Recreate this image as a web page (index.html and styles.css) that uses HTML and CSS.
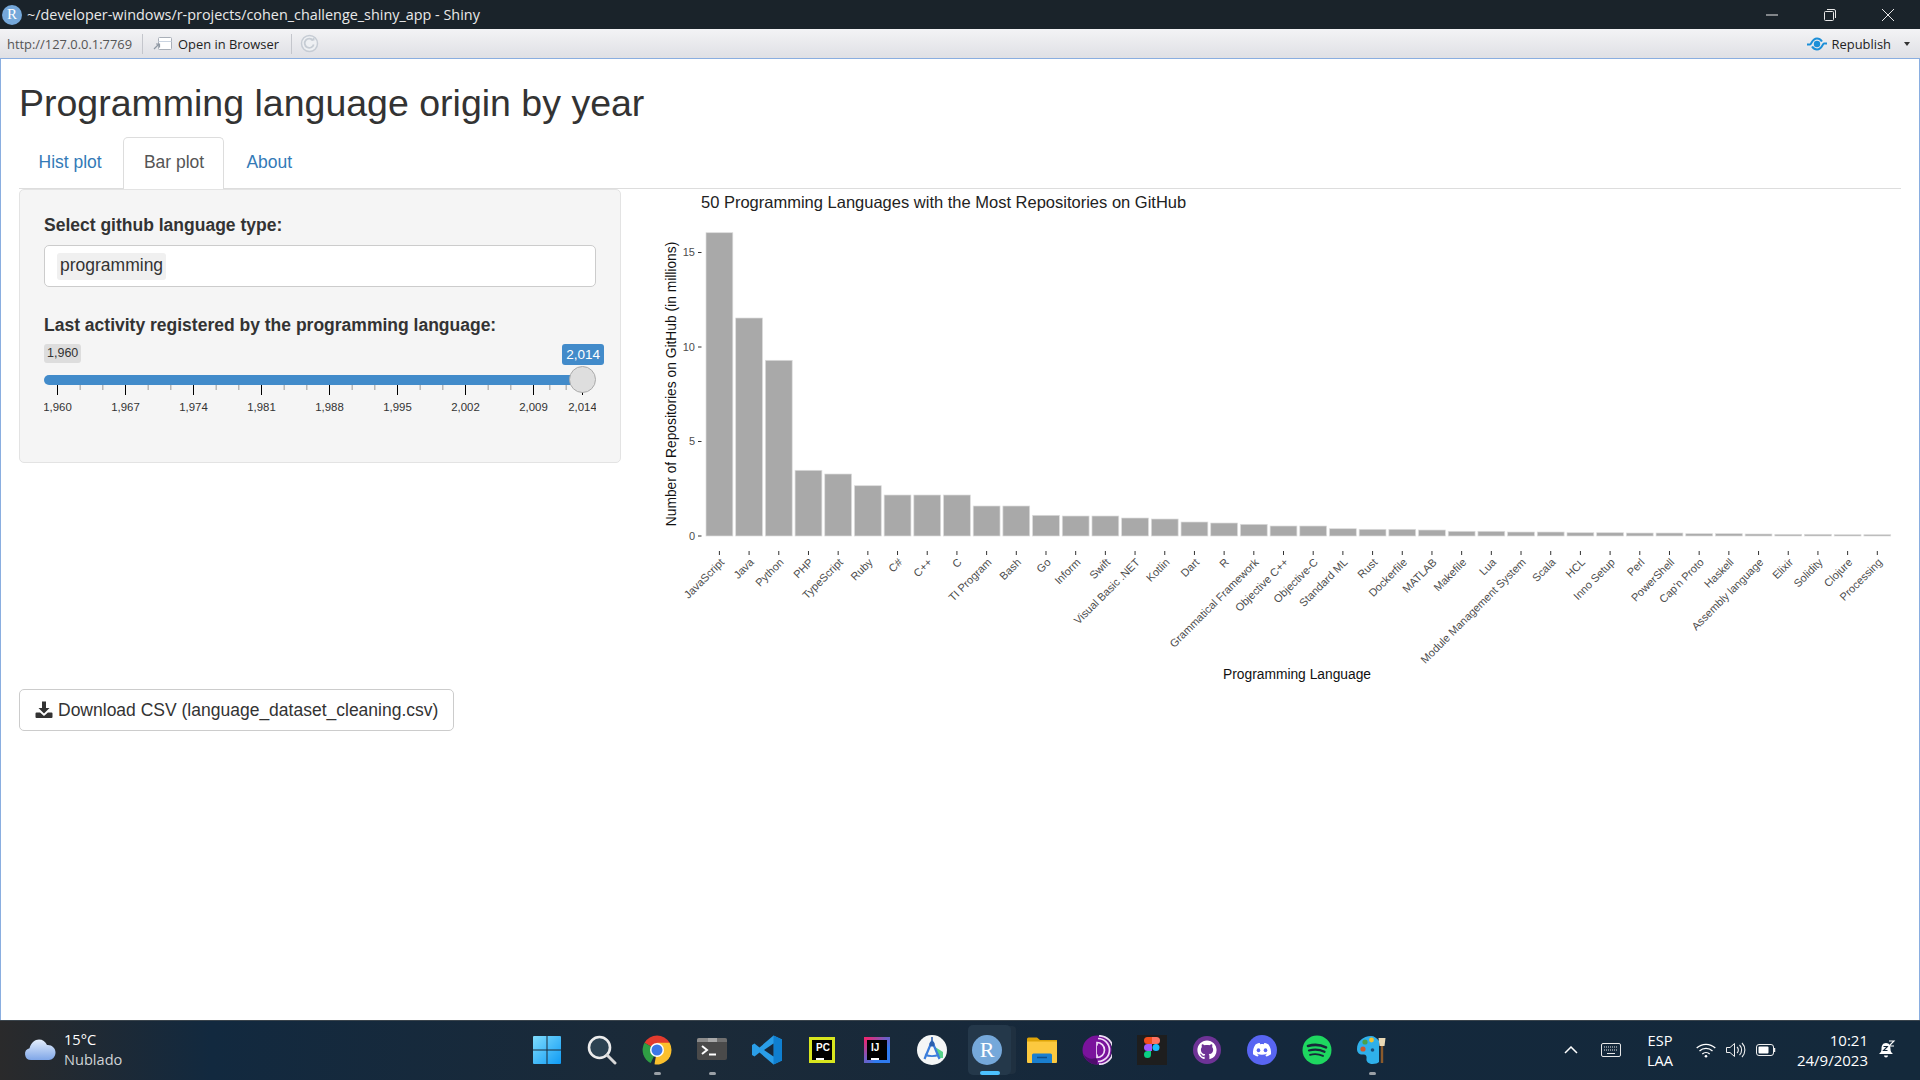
FILE: index.html
```html
<!DOCTYPE html>
<html lang="en">
<head>
    <meta charset="UTF-8">
    <title>Programming language origin by year</title>
    <link rel="stylesheet" href="styles.css">
</head>
<body>
    <div class="titlebar">
        <span class="r-badge">R</span>
        <span class="titlebar-text">~/developer-windows/r-projects/cohen_challenge_shiny_app - Shiny</span>
        <div class="window-buttons">
            <svg width="12" height="12" viewBox="0 0 12 12"><path d="M0 6h12" stroke="#e8e8e8" fill="none"/></svg>
            <svg width="12" height="12" viewBox="0 0 12 12"><path d="M.5 3.5a1 1 0 0 1 1-1h7a1 1 0 0 1 1 1v7a1 1 0 0 1-1 1h-7a1 1 0 0 1-1-1zM3 .5h7a1.5 1.5 0 0 1 1.5 1.5v7" stroke="#e8e8e8" fill="none"/></svg>
            <svg width="12" height="12" viewBox="0 0 12 12"><path d="M0 0l12 12M12 0L0 12" stroke="#e8e8e8" fill="none"/></svg>
        </div>
    </div>

    <div class="toolbar">
        <span class="url">http://127.0.0.1:7769</span>
        <span class="tool-sep"></span>
        <svg class="open-icon" width="20" height="16" viewBox="0 0 20 16">
            <rect x="5.5" y="1.5" width="13" height="12" rx="1" fill="#fff" stroke="#a9afb8"/>
            <path d="M5.5 5.500h13" stroke="#c9d3e0"/>
            <path d="M1 13l5-5M3 8h3.500v3.500" stroke="#8f98a3" fill="none" stroke-width="1.200"/>
        </svg>
        <span class="open-text">Open in Browser</span>
        <span class="tool-sep second"></span>
        <svg width="19" height="19" viewBox="0 0 19 19">
            <circle cx="9.500" cy="9.500" r="8" fill="#eef0f3" stroke="#c6ccd4" stroke-width="1.500"/>
            <path d="M13 6.500a4.600 4.600 0 1 0 .7 4" stroke="#c6ccd4" stroke-width="1.800" fill="none"/>
            <path d="M10.500 6.500h4v-3.500z" fill="#c6ccd4"/>
        </svg>
        <div class="republish">
            <svg width="22" height="16" viewBox="0 0 22 16">
                <circle cx="11" cy="8" r="3.200" fill="#1c8fd8"/>
                <path d="M1 8.500h3c1.500 0 2-6 7-6 3 0 4 1.600 5 3M21 7.500h-3c-1.500 0-2 6-7 6-3 0-4-1.600-5-3" stroke="#1c8fd8" stroke-width="2" fill="none"/>
            </svg>
            <span>Republish</span>
            <span class="caret"></span>
        </div>
    </div>

    <div class="app">
        <h1>Programming language origin by year</h1>
        <ul class="tabs">
            <li><a>Hist plot</a></li>
            <li class="active"><a>Bar plot</a></li>
            <li><a>About</a></li>
        </ul>
        <div class="row">
            <div class="sidebar">
                <label>Select github language type:</label>
                <div class="select-box"><span class="chip">programming</span></div>
                <label class="second-label">Last activity registered by the programming language:</label>
                <div class="slider">
                    <div class="slider-values">
                        <span class="value-min">1,960</span>
                        <span class="value-max">2,014</span>
                    </div>
                    <div class="slider-track"><span class="slider-handle"></span></div>
                    <svg id="sliderGrid" class="slider-grid" width="552" height="30"></svg>
                </div>
            </div>
            <svg id="barChart" class="chart" width="1280" height="500" viewBox="620 189 1280 500"></svg>
        </div>
        <button class="download">
            <svg width="18" height="18" viewBox="0 0 18 18">
                <path d="M7 .5h4v6.500h3.500L9 12.500 3.500 7H7z" fill="#333"/>
                <path d="M1.500 11.500h3.600L9 15l3.900-3.500h3.600a1 1 0 0 1 1 1v3.500a1 1 0 0 1-1 1h-15a1 1 0 0 1-1-1v-3.500a1 1 0 0 1 1-1z" fill="#333"/>
            </svg>
            Download CSV (language_dataset_cleaning.csv)
        </button>
    </div>

    <div class="taskbar">
        <div class="weather">
            <svg width="32" height="22" viewBox="0 0 32 22">
                <defs>
                    <linearGradient id="cloudFill" x1="0" y1="0" x2="0" y2="1">
                        <stop offset="0" stop-color="#e4eefc"/>
                        <stop offset="1" stop-color="#7fa6e8"/>
                    </linearGradient>
                </defs>
                <path d="M7 21a6 6 0 0 1-1.500-11.800C7 3.500 11 .5 15 .5c3.500 0 6.500 2 8 5.500 4.500-.5 8.500 3 8.500 7.500S28 21 25 21z" fill="url(#cloudFill)"/>
            </svg>
            <div class="weather-text">
                <span>15°C</span>
                <span class="weather-sub">Nublado</span>
            </div>
        </div>

        <div class="task-icons">
            <div class="task-item">
                <svg width="30" height="30" viewBox="0 0 30 30">
                    <defs>
                        <linearGradient id="winFill" x1="0" y1="0" x2="1" y2="1">
                            <stop offset="0" stop-color="#7fdcfc"/>
                            <stop offset="1" stop-color="#0f9bf5"/>
                        </linearGradient>
                    </defs>
                    <path d="M1 2a1 1 0 0 1 1-1h12.500v13.500H1zM15.500 1H28a1 1 0 0 1 1 1v12.500H15.500zM1 15.500h13.500V29H2a1 1 0 0 1-1-1zM15.500 15.500H29V28a1 1 0 0 1-1 1H15.500z" fill="url(#winFill)"/>
                </svg>
            </div>
            <div class="task-item">
                <svg width="30" height="30" viewBox="0 0 30 30">
                    <circle cx="12.500" cy="12.500" r="10.500" fill="#2c4252" stroke="#ececec" stroke-width="2.600"/>
                    <path d="M20 20l8 8" stroke="#d8d8d8" stroke-width="3" stroke-linecap="round"/>
                </svg>
            </div>
            <div class="task-item running">
                <svg width="30" height="30" viewBox="0 0 30 30">
                    <path d="M15 15L2.500 7.800A14.500 14.500 0 0 1 27.600 7.800z" fill="#e33b2e"/>
                    <path d="M15 15l-6.300 13A14.500 14.500 0 0 1 2.500 7.800L15 15z" fill="#2f9e44" />
                    <path d="M15 15h14.500A14.500 14.500 0 0 1 12.500 29.300L15 15z" fill="#fbc02d"/>
                    <path d="M15 7.800h12.600A14.500 14.500 0 0 1 29.500 15H22z" fill="#fbc02d"/>
                    <circle cx="15" cy="15" r="7" fill="#fff"/>
                    <circle cx="15" cy="15" r="5.500" fill="#3b78e7"/>
                </svg>
            </div>
            <div class="task-item running">
                <svg width="30" height="30" viewBox="0 0 30 30">
                    <rect y="3" width="30" height="22" rx="2" fill="#4a4a4a"/>
                    <path d="M0 7V5a2 2 0 0 1 2-2h9v4z" fill="#8c8c8c"/>
                    <path d="M11 3h9v4h-9z" fill="#a8a8a8"/>
                    <path d="M20 3h8a2 2 0 0 1 2 2v2H20z" fill="#6f6f6f"/>
                    <path d="M5 11l5 4-5 4" stroke="#fff" stroke-width="2" fill="none"/>
                    <path d="M12 19.500h7" stroke="#fff" stroke-width="2"/>
                </svg>
            </div>
            <div class="task-item">
                <svg width="30" height="30" viewBox="0 0 30 30">
                    <path d="M21.500 .5L30 4.500v21L21.500 29.500 7.500 17.500 2.500 21.500 0 20V10l2.500-1.500 5 4z" fill="#2a9ee8"/>
                    <path d="M21.500 .5L30 4.500v21l-8.500 4z" fill="#0f7fd0"/>
                    <path d="M21.500 8.500L12 15l9.500 6.500z" fill="#17283a"/>
                </svg>
            </div>
            <div class="task-item">
                <span class="jb-icon pc">PC</span>
            </div>
            <div class="task-item">
                <span class="jb-icon ij">IJ</span>
            </div>
            <div class="task-item">
                <svg width="30" height="30" viewBox="0 0 30 30">
                    <circle cx="15" cy="15" r="15" fill="#f4f6f6"/>
                    <path d="M18 12l8 5v6h-5z" fill="#57d28a"/>
                    <path d="M15 6L7.500 24M15 6l7.500 18M8 19.500c4 2 10 2 14 0" stroke="#3a7ddb" stroke-width="2.200" fill="none"/>
                    <circle cx="15" cy="9" r="2.600" fill="#2b5fae"/>
                    <path d="M15 2v5" stroke="#2b5fae" stroke-width="1.600"/>
                </svg>
            </div>
            <div class="task-item selected">
                <span class="r-big">R</span>
            </div>
            <div class="task-item">
                <svg width="30" height="30" viewBox="0 0 30 30">
                    <path d="M0 4a1.500 1.500 0 0 1 1.500-1.500h8.500l3 2.500h17v4H0z" fill="#dea408"/>
                    <path d="M0 6.500h30V27a1 1 0 0 1-1 1H1a1 1 0 0 1-1-1z" fill="#fcc93f"/>
                    <path d="M5 20a1.500 1.500 0 0 1 1.500-1.500h17A1.500 1.500 0 0 1 25 20v8H5z" fill="#1a7fcf"/>
                    <path d="M10 22.500h10" stroke="#0e4f8a" stroke-width="1.500"/>
                </svg>
            </div>
            <div class="task-item">
                <svg width="30" height="30" viewBox="0 0 30 30">
                    <circle cx="15" cy="15" r="14.500" fill="#7a139c"/>
                    <path d="M15 29.500a14.500 14.500 0 0 1-14-11c4 6 10 6 14 4z" fill="#4f0d6e"/>
                    <path d="M15 7.500a7.500 7.500 0 0 1 0 15zM16 3.500a11.500 11.500 0 0 1 0 23M17 .8a14.200 14.200 0 0 1 0 28.400" stroke="#f0ddf7" stroke-width="1.700" fill="none"/>
                    <path d="M15 10.500a4.500 4.500 0 0 1 0 9z" fill="#7a139c"/>
                </svg>
            </div>
            <div class="task-item">
                <svg width="30" height="30" viewBox="0 0 30 30">
                    <rect width="30" height="30" fill="#1e1e1e"/>
                    <path d="M15 2h-4.500a3.500 3.500 0 0 0 0 7H15z" fill="#f24e1e"/>
                    <path d="M15 2h4.500a3.500 3.500 0 0 1 0 7H15z" fill="#ff7262"/>
                    <path d="M15 9h-4.500a3.500 3.500 0 0 0 0 7H15z" fill="#a259ff"/>
                    <circle cx="19" cy="12.500" r="3.500" fill="#1abcfe"/>
                    <path d="M10.500 16H14v3.500a3.500 3.500 0 1 1-3.500-3.500z" fill="#0acf83"/>
                </svg>
            </div>
            <div class="task-item">
                <svg width="30" height="30" viewBox="0 0 30 30">
                    <circle cx="15" cy="15" r="14" fill="#6e3396"/>
                    <g transform="translate(5.400 5.400) scale(1.200)">
                        <path d="M8 0C3.580 0 0 3.580 0 8c0 3.540 2.290 6.530 5.470 7.590.4.070.55-.17.55-.38 0-.19-.01-.82-.01-1.490-2.010.37-2.530-.49-2.690-.94-.09-.23-.48-.94-.82-1.130-.28-.15-.68-.52-.01-.53.63-.01 1.080.58 1.230.82.72 1.210 1.870.87 2.330.66.07-.52.28-.87.51-1.070-1.780-.2-3.640-.89-3.640-3.950 0-.87.31-1.590.82-2.150-.08-.2-.36-1.020.08-2.120 0 0 .67-.21 2.200.82.64-.18 1.320-.27 2-.27.68 0 1.360.09 2 .27 1.530-1.040 2.200-.82 2.200-.82.44 1.100.16 1.920.08 2.120.51.56.82 1.270.82 2.150 0 3.070-1.870 3.750-3.650 3.950.29.25.54.73.54 1.480 0 1.070-.01 1.930-.01 2.200 0 .21.15.46.55.38A8.013 8.013 0 0016 8c0-4.420-3.580-8-8-8z" fill="#fff"/>
                    </g>
                </svg>
            </div>
            <div class="task-item">
                <svg width="30" height="30" viewBox="0 0 30 30">
                    <circle cx="15" cy="15" r="15" fill="#5865f2"/>
                    <path d="M8.500 9.500c2-1 3.500-1.300 4.200-1.400l.5 1.100c1.200-.2 2.400-.2 3.600 0l.5-1.100c.7.100 2.200.4 4.200 1.400 2 3 2.800 6 2.500 9.800-1.800 1.300-3.400 2-4.700 2.300l-1-1.600 1.700-.9-.4-.3c-3.100 1.400-6.100 1.400-9.200 0l-.4.3 1.700.9-1 1.600c-1.300-.3-2.900-1-4.700-2.300-.3-3.800.5-6.800 2.500-9.800z" fill="#fff"/>
                    <ellipse cx="11.500" cy="15.200" rx="1.800" ry="2" fill="#5865f2"/>
                    <ellipse cx="18.500" cy="15.200" rx="1.800" ry="2" fill="#5865f2"/>
                </svg>
            </div>
            <div class="task-item">
                <svg width="30" height="30" viewBox="0 0 30 30">
                    <circle cx="15" cy="15" r="14.500" fill="#1ed760"/>
                    <path d="M6 11c6-1.800 12.500-1.400 18 1.400" stroke="#17283a" stroke-width="2.600" fill="none" stroke-linecap="round"/>
                    <path d="M7 15.500c5.500-1.500 11-1 15.500 1.300" stroke="#17283a" stroke-width="2.200" fill="none" stroke-linecap="round"/>
                    <path d="M8 19.800c4.500-1.200 9-.8 13 1.100" stroke="#17283a" stroke-width="1.900" fill="none" stroke-linecap="round"/>
                </svg>
            </div>
            <div class="task-item running">
                <svg width="30" height="30" viewBox="0 0 30 30">
                    <path d="M14 1C6 1 0 6.500 0 14c0 4 3 6 6 5.500 3-.3 4 1.500 3.500 4-.5 3 2 5.500 6 5.500 3 0 5.500-1 6.500-2V6C20 3 17 1 14 1z" fill="#2fb0ea"/>
                    <circle cx="6" cy="14" r="2.600" fill="#d0552c"/>
                    <circle cx="8" cy="7" r="2.600" fill="#4aa14a"/>
                    <circle cx="14.500" cy="5" r="2.400" fill="#f2c230"/>
                    <circle cx="15.500" cy="15" r="1.800" fill="#1d4f7a"/>
                    <path d="M25 11v17" stroke="#8a5a2b" stroke-width="2.400"/>
                    <path d="M21.500 3h7l-1 8h-5z" fill="#e9d9b5"/>
                </svg>
            </div>
        </div>

        <div class="tray">
            <svg class="tray-caret" width="14" height="8" viewBox="0 0 14 8"><path d="M1 7l6-6 6 6" stroke="#fff" stroke-width="1.500" fill="none"/></svg>
            <svg class="tray-keyboard" width="20" height="14" viewBox="0 0 20 14">
                <rect x=".5" y=".5" width="19" height="13" rx="1.500" fill="none" stroke="#e8e8e8"/>
                <path d="M3 4h14M3 7h14" stroke="#e8e8e8" stroke-dasharray="1 1"/>
                <path d="M6 10.500h8" stroke="#e8e8e8"/>
            </svg>
            <div class="tray-lang"><span>ESP</span><span>LAA</span></div>
            <svg class="tray-wifi" width="20" height="15" viewBox="0 0 20 15">
                <path d="M.7 5a13.500 13.500 0 0 1 18.600 0M3.500 8a9.500 9.500 0 0 1 13 0M6.300 11a5.500 5.500 0 0 1 7.400 0" stroke="#fff" stroke-width="1.300" fill="none"/>
                <circle cx="10" cy="13.300" r="1.300" fill="#fff"/>
            </svg>
            <svg class="tray-sound" width="20" height="16" viewBox="0 0 20 16">
                <path d="M.5 5.500h3.500L8.500 1.500v13L4 10.500H.5z" fill="none" stroke="#eee"/>
                <path d="M11 5a4 4 0 0 1 0 6M13.500 3a7 7 0 0 1 0 10M16 1a10 10 0 0 1 0 14" fill="none" stroke="#eee" stroke-width="1.100"/>
            </svg>
            <svg class="tray-battery" width="20" height="12" viewBox="0 0 20 12">
                <rect x=".5" y=".5" width="17" height="11" rx="2.500" fill="none" stroke="#eee"/>
                <rect x="2.500" y="2.500" width="10" height="7" rx="1" fill="#fff"/>
                <path d="M18.500 4v4" stroke="#eee" stroke-width="1.500"/>
            </svg>
            <div class="tray-clock"><span>10:21</span><span>24/9/2023</span></div>
            <svg class="tray-bell" width="18" height="20" viewBox="0 0 18 20">
                <path d="M8 3c-3.500 0-4.500 3-4.500 6 0 2.500-1 3.500-2.500 5h14c-1.500-1.500-2.500-2.500-2.500-5 0-3-1-6-4.500-6z" fill="#fff"/>
                <path d="M6 15.500a2 2 0 0 0 4 0z" fill="#fff"/>
                <path d="M5.500 6.500h4l-4 4h4" stroke="#14293b" stroke-width="1.100" fill="none"/>
                <path d="M11 1h5l-5 5h5" stroke="#fff" stroke-width="1.100" fill="none"/>
            </svg>
        </div>
    </div>

    <script src="chart.js"></script>
</body>
</html>
```

FILE: styles.css
```css
html, body {
    margin: 0;
    padding: 0;
    height: 100%;
}
body {
    display: flex;
    flex-direction: column;
    width: 1920px;
    height: 1080px;
    overflow: hidden;
    font-family: "Liberation Sans", Arial, sans-serif;
    color: #333;
    background-color: #fff;
}

/* window chrome */
.titlebar {
    display: flex;
    align-items: center;
    height: 29px;
    flex-shrink: 0;
    background-color: #1a232a;
    color: #e9e9e9;
}
.r-badge {
    display: flex;
    align-items: center;
    justify-content: center;
    width: 20px;
    height: 20px;
    margin-left: 2px;
    border-radius: 50%;
    background-color: #75a8da;
    color: #fff;
    font-family: "Liberation Serif", serif;
    font-size: 15px;
}
.titlebar-text {
    margin-left: 5px;
    font-family: "Open Sans", sans-serif;
    font-size: 14.4px;
}
.window-buttons {
    display: flex;
    gap: 46px;
    margin-left: auto;
    margin-right: 26px;
}
.toolbar {
    display: flex;
    align-items: center;
    height: 29px;
    flex-shrink: 0;
    background: linear-gradient(#f3f3f5, #dfe0e5);
    font-family: "Open Sans", sans-serif;
    font-size: 12.9px;
    color: #222;
}
.url {
    margin-left: 7px;
    width: 135px;
    color: #555;
}
.tool-sep {
    width: 1px;
    height: 20px;
    background-color: #c4c6cc;
}
.open-icon {
    margin-left: 10px;
    margin-right: 5px;
}
.open-text {
    width: 113px;
}
.tool-sep.second {
    margin-right: 8px;
}
.republish {
    display: flex;
    align-items: center;
    gap: 4px;
    margin-left: auto;
    margin-right: 10px;
}
.caret {
    width: 0;
    height: 0;
    margin-left: 9px;
    border-left: 3.5px solid transparent;
    border-right: 3.5px solid transparent;
    border-top: 4px solid #333;
}

/* shiny page */
.app {
    flex: 1;
    padding: 24px 18px 0;
    border: 1px solid #8aaee0;
    border-bottom: 0;
    min-height: 0;
}
h1 {
    margin: 0 0 13px;
    font-size: 37.5px;
    font-weight: 400;
    line-height: 41px;
    color: #333;
}
.tabs {
    display: flex;
    gap: 2.7px;
    margin: 0;
    padding: 0;
    list-style: none;
    border-bottom: 1px solid #ddd;
    height: 51px;
    font-size: 17.5px;
}
.tabs a {
    display: block;
    padding: 12px 19px 14px 19.5px;
    line-height: 25px;
    color: #337ab7;
    border: 1px solid transparent;
    border-bottom: 0;
    margin-left: -1px;
}
.tabs .active a {
    height: 25px;
    color: #555;
    background-color: #fff;
    border-color: #ddd;
    border-radius: 5px 5px 0 0;
}
.row {
    display: flex;
    height: 500px;
}
.sidebar {
    box-sizing: border-box;
    width: 602px;
    height: 274px;
    padding: 23px 24px;
    flex-shrink: 0;
    background-color: #f5f5f5;
    border: 1px solid #e3e3e3;
    border-radius: 5px;
    font-size: 17.5px;
}
label {
    display: block;
    font-weight: 700;
    line-height: 25px;
}
.second-label {
    margin-top: 26px;
}
.select-box {
    display: flex;
    align-items: center;
    box-sizing: border-box;
    height: 42px;
    margin-top: 7px;
    padding: 0 12px;
    background-color: #fff;
    border: 1px solid #ccc;
    border-radius: 5px;
}
.chip {
    padding: 1px 3px 3px;
    line-height: 23px;
    background-color: #f0f0f0;
    border-radius: 3px;
}
.slider {
    margin-top: 6px;
}
.slider-values {
    display: flex;
    justify-content: space-between;
    align-items: flex-start;
    height: 21px;
    margin-right: -8px;
    font-size: 12.5px;
}
.value-min {
    padding: 0 3px;
    line-height: 19px;
    background-color: #ddd;
    border-radius: 3px;
}
.value-max {
    padding: 0 4px;
    line-height: 21px;
    font-size: 13.5px;
    color: #fff;
    background-color: #428bca;
    border-radius: 3px;
}
.slider-track {
    position: relative;
    width: 538px;
    height: 10px;
    margin-top: 10px;
    background-color: #428bca;
    border-radius: 5px 0 0 5px;
}
.slider-handle {
    position: absolute;
    top: -9.5px;
    left: 525px;
    box-sizing: border-box;
    width: 27px;
    height: 27px;
    background-color: #dedede;
    border: 1px solid #aaa;
    border-radius: 50%;
}
.slider-grid {
    display: block;
}
.slider-grid text {
    font-size: 11.4px;
    fill: #333;
    text-anchor: middle;
}
.chart {
    display: block;
    flex-shrink: 0;
}
.chart text {
    font-family: "Liberation Sans", Arial, sans-serif;
}
.chart-title {
    font-size: 16.5px;
    fill: #222;
}
.axis-title {
    font-size: 13.8px;
    fill: #111;
    text-anchor: middle;
}
.axis-label {
    font-size: 11px;
    fill: #4d4d4d;
}
.download {
    display: flex;
    align-items: center;
    gap: 5px;
    box-sizing: border-box;
    width: 435px;
    height: 42px;
    padding: 0 0 0 15px;
    background-color: #fff;
    border: 1px solid #ccc;
    border-radius: 5px;
    font-family: "Liberation Sans", Arial, sans-serif;
    font-size: 17.5px;
    color: #333;
}

/* windows taskbar */
.taskbar {
    display: flex;
    align-items: center;
    height: 60px;
    flex-shrink: 0;
    box-sizing: border-box;
    padding-bottom: 1px;
    border-top: 1px solid #3a444c;
    background: linear-gradient(90deg, #2a2a2b 0, #12293f 11%, #1b2a38 35%, #14283c 62%, #14293b 100%);
    font-family: "Open Sans", sans-serif;
    font-size: 14.6px;
    color: #fff;
}
.weather {
    display: flex;
    align-items: center;
    width: 519.5px;
    padding-left: 24px;
    box-sizing: border-box;
}
.weather-text {
    display: flex;
    flex-direction: column;
    margin-left: 8px;
    padding-bottom: 2px;
    line-height: 20px;
}
.weather-sub {
    color: #cfd3d6;
}
.task-icons {
    display: flex;
    align-items: center;
    height: 100%;
}
.task-item {
    position: relative;
    display: flex;
    align-items: center;
    justify-content: center;
    width: 55px;
    height: 100%;
}
.task-item.running::after {
    content: "";
    position: absolute;
    bottom: 4px;
    left: 24px;
    width: 7px;
    height: 3px;
    border-radius: 2px;
    background-color: #9aa0a6;
}
.task-item.selected::before {
    content: "";
    position: absolute;
    top: 4px;
    left: 8px;
    width: 43px;
    height: 50px;
    border-radius: 5px;
    background-color: #24384a;
    box-shadow: 6px 0 0 -1px #1f3040;
}
.task-item.selected::after {
    content: "";
    position: absolute;
    bottom: 4px;
    left: 20px;
    width: 20px;
    height: 4px;
    border-radius: 2px;
    background-color: #4cc2ff;
}
.jb-icon {
    display: block;
    box-sizing: border-box;
    width: 26px;
    height: 26px;
    padding: 2px 0 0 4px;
    background-color: #000;
    border: 3px solid #d8e61e;
    color: #fff;
    font-family: "Liberation Sans", sans-serif;
    font-size: 10px;
    font-weight: 700;
    line-height: 11px;
}
.jb-icon::after {
    content: "";
    display: block;
    width: 8px;
    height: 1.5px;
    margin-top: 5px;
    background-color: #fff;
}
.jb-icon.ij {
    border-image: linear-gradient(135deg, #f0246e, #2f7bf0 70%) 1;
}
.r-big {
    position: relative;
    display: flex;
    align-items: center;
    justify-content: center;
    width: 30px;
    height: 30px;
    border-radius: 50%;
    background-color: #75a8da;
    color: #fff;
    font-family: "Liberation Serif", serif;
    font-size: 22px;
}
.tray {
    flex: 1;
    display: flex;
    align-items: center;
    height: 100%;
}
.tray-caret {
    margin-left: 164.500px;
}
.tray-keyboard {
    margin-left: 23px;
}
.tray-lang {
    display: flex;
    flex-direction: column;
    align-items: center;
    width: 40px;
    margin-left: 19px;
    line-height: 20px;
}
.tray-wifi {
    margin-left: 16px;
}
.tray-sound {
    margin-left: 10px;
}
.tray-battery {
    margin-left: 10px;
}
.tray-clock {
    display: flex;
    flex-direction: column;
    align-items: flex-end;
    width: 92px;
    font-size: 15px;
    line-height: 20px;
}
.tray-bell {
    margin-left: 10px;
}
```

FILE: chart.js
```js
const languages = [
    ["JavaScript", 303.3], ["Java", 218], ["Python", 175.7], ["PHP", 65.7], ["TypeScript", 62],
    ["Ruby", 50.3], ["C#", 41], ["C++", 41], ["C", 41], ["TI Program", 30],
    ["Bash", 30], ["Go", 20.7], ["Inform", 20], ["Swift", 20], ["Visual Basic .NET", 18],
    ["Kotlin", 17], ["Dart", 14], ["R", 13], ["Grammatical Framework", 11.7], ["Objective C++", 10],
    ["Objective-C", 10], ["Standard ML", 7.3], ["Rust", 6.7], ["Dockerfile", 6.7], ["MATLAB", 6],
    ["Makefile", 4.7], ["Lua", 4.7], ["Module Management System", 4], ["Scala", 4], ["HCL", 3.3],
    ["Inno Setup", 3.3], ["Perl", 3], ["PowerShell", 3], ["Cap'n Proto", 2.3], ["Haskell", 2.3],
    ["Assembly language", 2], ["Elixir", 1.7], ["Solidity", 1.7], ["Clojure", 1.3], ["Processing", 1.3]
];

function drawChart() {
    const baseY = 536;
    const step = 29.69;
    let out = '<text class="chart-title" x="700" y="208">50 Programming Languages with the Most Repositories on GitHub</text>';
    out += `<text class="axis-title" transform="translate(675 384) rotate(-90)">Number of Repositories on GitHub (in millions)</text>`;
    out += '<text class="axis-title" x="1296" y="679">Programming Language</text>';

    [0, 5, 10, 15].forEach(value => {
        const y = baseY - value * 18.9;
        out += `<path d="M697 ${y}h3.5" stroke="#333"/>`;
        out += `<text class="axis-label" x="694" y="${y + 3.7}" text-anchor="end">${value}</text>`;
    });

    languages.forEach((lang, index) => {
        const x = 718.4 + index * step;
        out += `<rect x="${x - 13.4}" y="${baseY - lang[1]}" width="26.8" height="${lang[1]}" fill="#a9a9a9" stroke="#dcdcdc" stroke-width="0.7"/>`;
        out += `<path d="M${x} 551v4" stroke="#333"/>`;
        out += `<text class="axis-label" text-anchor="end" transform="translate(${x + 5.5} 563) rotate(-45)">${lang[0]}</text>`;
    });

    document.getElementById('barChart').innerHTML = out;
}

function drawSliderGrid() {
    const majors = [[13.5, "1,960"], [81.5, "1,967"], [149.5, "1,974"], [217.5, "1,981"], [285.5, "1,988"], [353.5, "1,995"], [421.5, "2,002"], [489.5, "2,009"], [538.5, "2,014"]];
    let out = '';
    majors.forEach((major, index) => {
        out += `<path d="M${major[0]} 0v10" stroke="#000"/>`;
        out += `<text x="${major[0]}" y="26">${major[1]}</text>`;
        if (index < majors.length - 1) {
            const gap = (majors[index + 1][0] - major[0]) / 3;
            out += `<path d="M${major[0] + gap} 0v5M${major[0] + 2 * gap} 0v5" stroke="#999"/>`;
        }
    });
    document.getElementById('sliderGrid').innerHTML = out;
}

document.addEventListener("DOMContentLoaded", function() {
    drawChart();
    drawSliderGrid();
});
```
